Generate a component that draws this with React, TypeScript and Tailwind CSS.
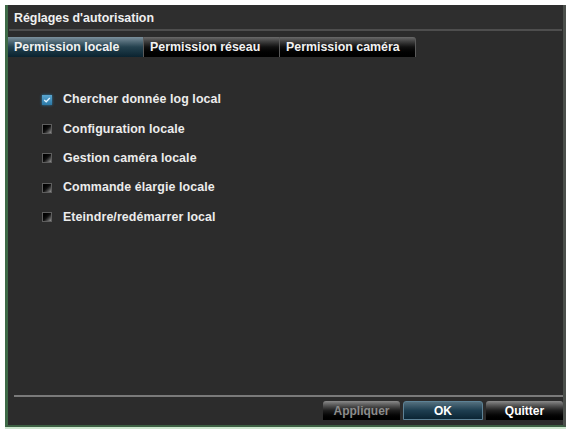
import * as React from "react";

const FONT = { fontFamily: '"Liberation Sans", Arial, sans-serif' };

const TABS = ["Permission locale", "Permission réseau", "Permission caméra"];

const PERMISSIONS = [
  { label: "Chercher donnée log local", checked: true },
  { label: "Configuration locale", checked: false },
  { label: "Gestion caméra locale", checked: false },
  { label: "Commande élargie locale", checked: false },
  { label: "Eteindre/redémarrer local", checked: false },
];

function Checkbox({ checked }: { checked: boolean }) {
  if (checked) {
    return (
      <span className="flex size-[10px] items-center justify-center bg-gradient-to-b from-[#5aa6d0] to-[#2a78a6] shadow-[0_0_3px_#2c7fb0]">
        <svg viewBox="0 0 10 10" className="size-[8px]">
          <path d="M1.5 5 L4 7.2 L8.5 2.5" fill="none" stroke="#dff2ff" strokeWidth="1.6" />
        </svg>
      </span>
    );
  }
  return (
    <span className="size-[10px] border border-[#5e5e5e] bg-gradient-to-br from-[#000] via-[#111] to-[#9a9a9a]" />
  );
}

function FooterButton({
  children,
  variant = "default",
}: {
  children: React.ReactNode;
  variant?: "default" | "primary" | "disabled";
}) {
  const base =
    "flex h-[19px] items-center justify-center rounded-t-[3px] text-[12px] font-bold";
  if (variant === "primary") {
    return (
      <div
        className={`${base} w-[80px] border border-[#5d8296] bg-gradient-to-b from-[#54707e] via-[#1e3e50] to-[#0b2534] text-white`}
      >
        {children}
      </div>
    );
  }
  return (
    <div
      className={`${base} w-[77px] bg-gradient-to-b from-[#8a8a8a] via-[#1f1f1f] to-[#000] ${
        variant === "disabled" ? "text-[#8c8c8c]" : "text-white"
      }`}
    >
      {children}
    </div>
  );
}

export default function App() {
  const [active] = React.useState(0);

  return (
    <div
      className="h-[431px] w-[570px] bg-white pb-[4px] pl-[5px] pr-[4px] pt-[5px]"
      style={FONT}
    >
      <div className="flex h-full flex-col border-b-[2px] border-l-[3px] border-r-[3px] border-b-[#3c5f42] border-l-[#3e6a47] border-r-[#4b4f4b] bg-[#2c2c2c] shadow-[0_2px_0_#cde6cf]">
        {/* title bar */}
        <div className="flex h-[24px] items-center bg-[#2e2e2e] pl-[6px] pt-[2px] text-[12.4px] font-bold text-[#f0f0f0]">
          Réglages d&apos;autorisation
        </div>
        <div className="mx-[1px] h-[2px] bg-[#4e4e4e]" />

        {/* tabs */}
        <div className="mt-[6px] flex h-[20px]">
          {TABS.map((tab, i) => (
            <div
              key={tab}
              className={`flex w-[136px] items-center border-r border-[#5a5a5a] pl-[6px] text-[12.4px] font-bold text-[#f2f2f2] ${
                i === active
                  ? "bg-gradient-to-b from-[#7c909c] via-[#24424f] to-[#0a2330]"
                  : "bg-gradient-to-b from-[#6a6a6a] via-[#111] to-[#000]"
              } ${i === TABS.length - 1 ? "rounded-tr-[3px]" : ""}`}
            >
              {tab}
            </div>
          ))}
        </div>

        {/* permission list */}
        <div className="flex flex-1 flex-col pl-[34px] pt-[28px]">
          {PERMISSIONS.map((p) => (
            <div key={p.label} className="flex h-[29.3px] items-center gap-[11px]">
              <Checkbox checked={p.checked} />
              <span className="text-[12.4px] font-bold tracking-[0.1px] text-[#ececec]">
                {p.label}
              </span>
            </div>
          ))}
        </div>

        {/* footer */}
        <div className="ml-[6px] h-[2px] bg-[#7a7a7a]" />
        <div className="flex h-[28px] items-start justify-end gap-[3px] pt-[4px]">
          <FooterButton variant="disabled">Appliquer</FooterButton>
          <FooterButton variant="primary">OK</FooterButton>
          <FooterButton>Quitter</FooterButton>
        </div>
      </div>
    </div>
  );
}
